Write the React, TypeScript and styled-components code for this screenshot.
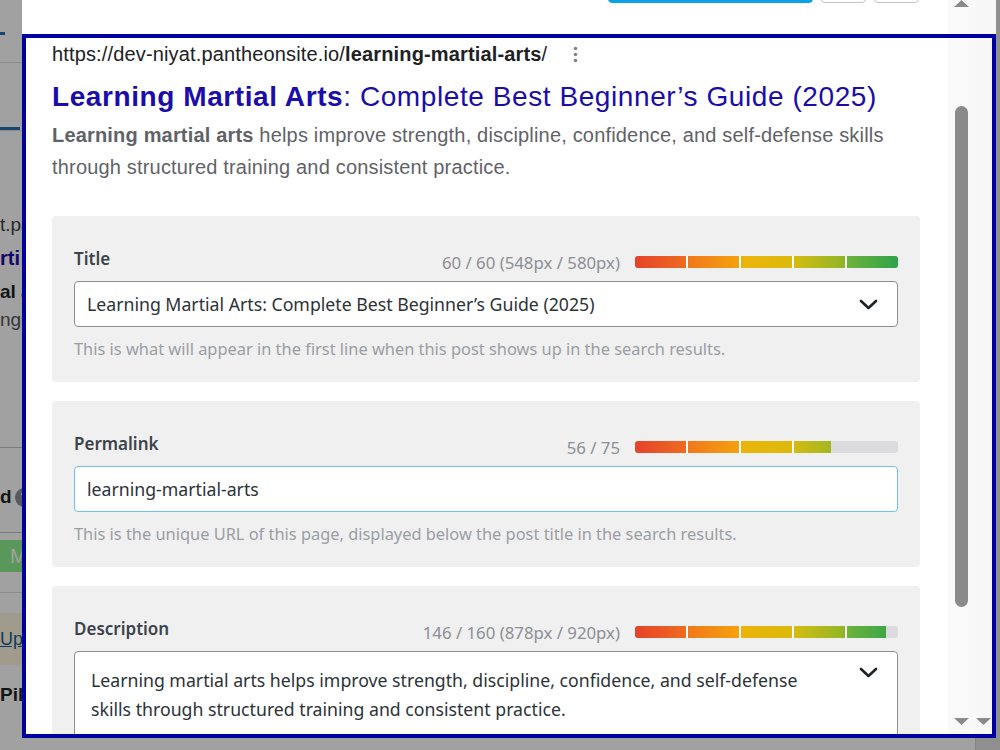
import React from "react";
import styled, { createGlobalStyle } from "styled-components";

const GlobalStyle = createGlobalStyle`
  html, body {
    margin: 0;
    padding: 0;
  }
  body {
    width: 1000px;
    height: 750px;
    overflow: hidden;
    background: #fff;
    font-family: "Noto Sans", "Open Sans", sans-serif;
  }
`;

/* ---------- page behind the dialog ---------- */

const Page = styled.div`
  display: flex;
  height: 750px;
  background: #fff;
`;

const PageSide = styled.aside`
  width: 22px;
  flex-shrink: 0;
  overflow: hidden;
  display: flex;
  flex-direction: column;
  font-family: "Liberation Sans", Arial, sans-serif;
`;

const PageMain = styled.div`
  flex: 1;
`;

const PageScroll = styled.div`
  width: 24px;
  background: #e4e4e4;
  border-left: 1px solid #d0d0d0;
`;

const SideMark = styled.div<{ $top: number; $w: number; $h: number; $color: string }>`
  margin-top: ${(p) => p.$top}px;
  width: ${(p) => p.$w}px;
  height: ${(p) => p.$h}px;
  background: ${(p) => p.$color};
  flex-shrink: 0;
`;

const SideText = styled.div<{ $top: number; $bold?: boolean; $color?: string; $size?: number }>`
  margin-top: ${(p) => p.$top}px;
  font-size: ${(p) => p.$size ?? 19}px;
  line-height: 22px;
  font-weight: ${(p) => (p.$bold ? 700 : 400)};
  color: ${(p) => p.$color ?? "#1d2327"};
  white-space: nowrap;
  display: flex;
  align-items: center;
  gap: 3px;
`;

const HelpDot = styled.span`
  width: 19px;
  height: 19px;
  border-radius: 50%;
  background: #8c8f94;
  color: #fff;
  font-size: 13px;
  font-weight: 700;
  display: inline-flex;
  align-items: center;
  justify-content: center;
  flex-shrink: 0;
`;

const SideButton = styled.div`
  margin-top: 7px;
  height: 32px;
  background: #8ff08f;
  color: #ffffff;
  font-size: 20px;
  line-height: 32px;
  padding-left: 10px;
  white-space: nowrap;
  flex-shrink: 0;
`;

const SideNotice = styled.div`
  margin-top: 20px;
  height: 52px;
  background: #fff6e0;
  display: flex;
  align-items: center;
  flex-shrink: 0;
`;

const SideLink = styled.span`
  color: #135e96;
  text-decoration: underline;
  font-size: 18px;
  white-space: nowrap;
`;

const Backdrop = styled.div`
  position: fixed;
  inset: 0;
  background: rgba(0, 0, 0, 0.37);
`;

/* ---------- dialog ---------- */

const Modal = styled.div`
  position: fixed;
  left: 22px;
  top: 0;
  width: 974px;
  height: 738px;
  display: flex;
  background: #fff;
`;

const Pane = styled.div`
  flex: 1;
  min-width: 0;
  overflow: hidden;
  display: flex;
  flex-direction: column;
`;

const Toolbar = styled.div`
  height: 34px;
  flex-shrink: 0;
  overflow: hidden;
  display: flex;
  justify-content: flex-end;
  gap: 8px;
  padding-right: 29px;
`;

const ToolButton = styled.button<{ $primary?: boolean; $w: number }>`
  width: ${(p) => p.$w}px;
  height: 40px;
  margin-top: -37px;
  border-radius: 4px;
  border: 1px solid ${(p) => (p.$primary ? "#0ba1e6" : "#c3c4c7")};
  background: ${(p) => (p.$primary ? "#0ba1e6" : "#fff")};
  padding: 0;
`;

const Content = styled.div`
  padding: 8px 28px 0 30px;
`;

const Serp = styled.div`
  font-family: "Liberation Sans", Arial, sans-serif;
`;

const UrlRow = styled.div`
  display: flex;
  align-items: center;
  gap: 26px;
  font-size: 20px;
  letter-spacing: 0.15px;
  line-height: 24px;
  color: #202124;

  b {
    font-weight: 700;
  }
`;

const SerpTitle = styled.div`
  margin-top: 13px;
  font-size: 28px;
  letter-spacing: 0.58px;
  line-height: 36px;
  color: #1a0dab;
  white-space: nowrap;
`;

const SerpDesc = styled.p`
  margin: 4px 0 0;
  font-size: 20px;
  letter-spacing: 0.18px;
  line-height: 32px;
  color: #5f6368;
  max-width: 860px;
`;

const Fields = styled.div`
  margin-top: 33px;
  display: flex;
  flex-direction: column;
  gap: 19px;
`;

const Card = styled.section`
  background: #f0f0f1;
  border-radius: 4px;
  padding: 22px;
`;

const FieldHead = styled.div`
  height: 35px;
  display: flex;
  align-items: flex-end;
  justify-content: space-between;
`;

const Label = styled.label`
  font-size: 17px;
  line-height: 24px;
  margin-bottom: 2px;
  font-weight: 600;
  color: #3c434a;
`;

const MeterGroup = styled.div`
  display: flex;
  align-items: center;
  gap: 15px;
  height: 22px;
`;

const Count = styled.span`
  font-size: 16.8px;
  color: #8c8f94;
  white-space: nowrap;
`;

const Track = styled.div`
  width: 263px;
  height: 12px;
  border-radius: 3px;
  background: #dcdcde;
  overflow: hidden;
`;

const Fill = styled.div`
  height: 100%;
  overflow: hidden;
`;

const Gradient = styled.div`
  width: 263px;
  height: 100%;
  background:
    repeating-linear-gradient(90deg, transparent 0 51px, #fff 51px 53px),
    linear-gradient(
      90deg,
      #e4432c 0%,
      #ef6b20 19%,
      #f17a1b 21%,
      #f4a00e 39%,
      #ebb40a 41%,
      #dcb90c 59%,
      #d2bb12 61%,
      #93b626 79%,
      #6cb23a 81%,
      #2fa34b 100%
    );
`;

const Field = styled.div<{ $focus?: boolean; $multi?: boolean }>`
  margin-top: 8px;
  min-height: 46px;
  box-sizing: border-box;
  background: #fff;
  border: 1px solid ${(p) => (p.$focus ? "#72c1ec" : "#8c8f94")};
  border-radius: 4px;
  display: flex;
  align-items: ${(p) => (p.$multi ? "flex-start" : "center")};
  justify-content: space-between;
  padding: ${(p) => (p.$multi ? "14px 19px 14px 16px" : "0 19px 0 12px")};
  font-size: ${(p) => (p.$multi ? "17.7px" : "17.7px")};
  color: #2c3338;
`;

const FieldText = styled.div<{ $multi?: boolean }>`
  line-height: ${(p) => (p.$multi ? "29px" : "24px")};
  max-width: 728px;
`;

const Chevron = styled.svg<{ $multi?: boolean }>`
  flex-shrink: 0;
  margin-top: ${(p) => (p.$multi ? "1px" : "0")};
`;

const Help = styled.p`
  margin: 11px 0 0;
  font-size: 16.4px;
  line-height: 22px;
  color: #9a9ea3;
`;

const VScroll = styled.div<{ $w: number; $bg: string }>`
  width: ${(p) => p.$w}px;
  flex-shrink: 0;
  background: ${(p) => p.$bg};
  display: flex;
  flex-direction: column;
  align-items: center;
  padding-bottom: 13px;
  box-sizing: border-box;
`;

const Thumb = styled.div`
  margin-top: 99px;
  width: 13px;
  height: 501px;
  border-radius: 7px;
  background: #8a8a8a;
`;

const Grow = styled.div`
  flex: 1;
`;

const OuterScroll = styled(VScroll)`
  padding-right: 4px;
`;

const FocusRing = styled.div`
  position: absolute;
  top: 34px;
  left: 0;
  right: 0;
  bottom: 0;
  border: 4px solid #0000a0;
  pointer-events: none;
`;

function Arrow({ up }: { up?: boolean }) {
  return (
    <svg width="15" height="7" viewBox="0 0 15 7">
      <polygon points={up ? "7.5,0 15,7 0,7" : "0,0 15,0 7.5,7"} fill="#8a8a8a" />
    </svg>
  );
}

function Kebab() {
  return (
    <svg width="5" height="17" viewBox="0 0 5 17">
      <circle cx="2.5" cy="2.5" r="1.8" fill="#80858a" />
      <circle cx="2.5" cy="8.5" r="1.8" fill="#80858a" />
      <circle cx="2.5" cy="14.5" r="1.8" fill="#80858a" />
    </svg>
  );
}

function Down({ multi }: { multi?: boolean }) {
  return (
    <Chevron $multi={multi} width="19" height="11" viewBox="0 0 19 11">
      <polyline
        points="2,2 9.5,9 17,2"
        fill="none"
        stroke="#1d2327"
        strokeWidth="2.6"
        strokeLinecap="round"
        strokeLinejoin="round"
      />
    </Chevron>
  );
}

function Meter({ count, pct }: { count: string; pct: number }) {
  return (
    <MeterGroup>
      <Count>{count}</Count>
      <Track>
        <Fill style={{ width: `${pct}%` }}>
          <Gradient />
        </Fill>
      </Track>
    </MeterGroup>
  );
}

export default function App() {
  return (
    <>
      <GlobalStyle />
      <Page>
        <PageSide>
          <SideMark $top={32} $w={5} $h={3} $color="#2271b1" />
          <SideMark $top={27} $w={22} $h={1} $color="#dcdcde" />
          <SideMark $top={64} $w={20} $h={3} $color="#2271b1" />
          <SideMark $top={0} $w={22} $h={1} $color="#dcdcde" />
          <SideText $top={83} $color="#3c434a">t.pa</SideText>
          <SideText $top={11} $bold $color="#1a0dab" $size={20}>rti</SideText>
          <SideText $top={12} $bold>al a</SideText>
          <SideText $top={6} $color="#50575e">ng</SideText>
          <SideMark $top={116} $w={22} $h={1} $color="#c3c4c7" />
          <SideText $top={38} $bold>
            d <HelpDot>?</HelpDot>
          </SideText>
          <SideMark $top={24} $w={22} $h={1} $color="#c3c4c7" />
          <SideButton>M</SideButton>
          <SideMark $top={20} $w={22} $h={1} $color="#dcdcde" />
          <SideNotice>
            <SideLink>Upg</SideLink>
          </SideNotice>
          <SideText $top={19} $bold>Pill</SideText>
        </PageSide>
        <PageMain />
        <PageScroll />
      </Page>
      <Backdrop />

      <Modal>
        <Pane>
          <Toolbar>
            <ToolButton $primary $w={205} />
            <ToolButton $w={45} />
            <ToolButton $w={45} />
          </Toolbar>
          <Content>
            <Serp>
              <UrlRow>
                <span>
                  https://dev-niyat.pantheonsite.io/<b>learning-martial-arts</b>/
                </span>
                <Kebab />
              </UrlRow>
              <SerpTitle>
                <b>Learning Martial Arts</b>: Complete Best Beginner’s Guide (2025)
              </SerpTitle>
              <SerpDesc>
                <b>Learning martial arts</b> helps improve strength, discipline, confidence, and
                self-defense skills through structured training and consistent practice.
              </SerpDesc>
            </Serp>

            <Fields>
              <Card>
                <FieldHead>
                  <Label>Title</Label>
                  <Meter count="60 / 60 (548px / 580px)" pct={100} />
                </FieldHead>
                <Field>
                  <FieldText>Learning Martial Arts: Complete Best Beginner’s Guide (2025)</FieldText>
                  <Down />
                </Field>
                <Help>
                  This is what will appear in the first line when this post shows up in the search
                  results.
                </Help>
              </Card>

              <Card>
                <FieldHead>
                  <Label>Permalink</Label>
                  <Meter count="56 / 75" pct={(56 / 75) * 100} />
                </FieldHead>
                <Field $focus>
                  <FieldText>learning-martial-arts</FieldText>
                </Field>
                <Help>
                  This is the unique URL of this page, displayed below the post title in the search
                  results.
                </Help>
              </Card>

              <Card>
                <FieldHead>
                  <Label>Description</Label>
                  <Meter count="146 / 160 (878px / 920px)" pct={(878 / 920) * 100} />
                </FieldHead>
                <Field $multi>
                  <FieldText $multi>
                    Learning martial arts helps improve strength, discipline, confidence, and
                    self-defense skills through structured training and consistent practice.
                  </FieldText>
                  <Down multi />
                </Field>
                <Help>
                  This is what will appear as the description when this post shows up in the search
                  results.
                </Help>
              </Card>
            </Fields>
          </Content>
        </Pane>

        <VScroll $w={27} $bg="#f9f9f9">
          <Arrow up />
          <Thumb />
          <Grow />
          <Arrow />
        </VScroll>
        <OuterScroll $w={21} $bg="#f7f7f7">
          <Grow />
          <Arrow />
        </OuterScroll>

        <FocusRing />
      </Modal>
    </>
  );
}
